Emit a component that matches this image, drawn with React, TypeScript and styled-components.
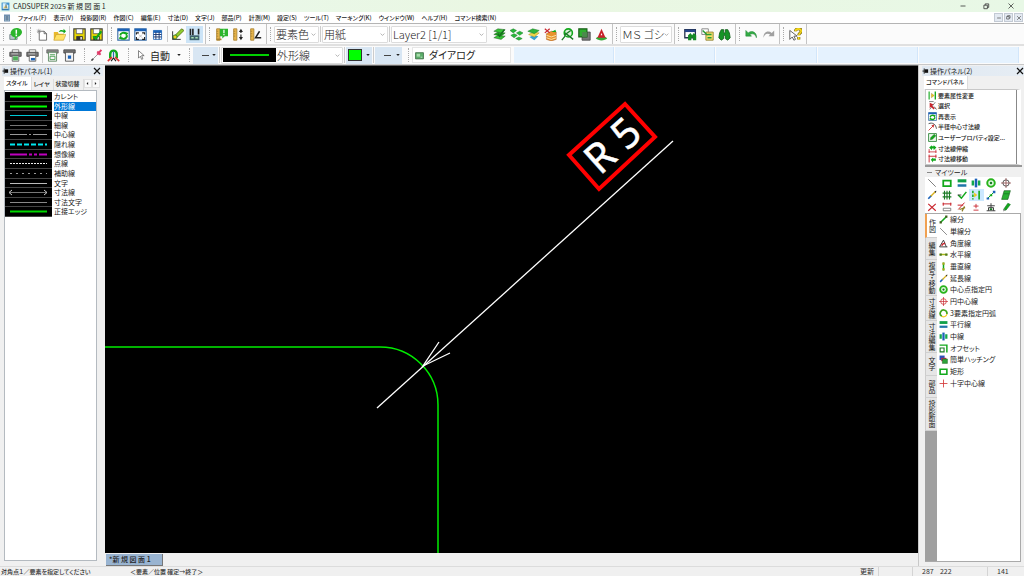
import React from "react";
import styled, { createGlobalStyle, css } from "styled-components";

const Global = createGlobalStyle`
  *, *::before, *::after { box-sizing: border-box; }
  body {
    margin: 0;
    background: #f0f0f0;
    color: #222;
    font-family: "Noto Sans CJK JP", "Noto Sans", sans-serif;
    font-size: 7px;
    line-height: 9px;
    font-feature-settings: "palt";
  }
  button, select, input {
    font: inherit;
    font-feature-settings: inherit;
    color: inherit;
    margin: 0;
    padding: 0;
    border: 0;
    background: transparent;
    border-radius: 0;
  }
  ul { list-style: none; margin: 0; padding: 0; }
`;

const G = "#12a81c";
const DG = "#1b7a26";
const Y = "#f2c81e";
const R = "#c8242c";
const B = "#1b62b8";
const K = "#333";

const doc = (
  <>
    <path d="M4 4h6l3 3v8H4z" fill="#fff" stroke="#555" />
    <path d="M10 4v3h3" fill="none" stroke="#555" />
  </>
);
const floppy = (
  <>
    <path d="M1 1h14v14H1z" fill="#e8d800" stroke="#444" strokeWidth="1.4" />
    <path d="M4 1h8v6H4z" fill="#fff" stroke="#555" />
    <path d="M4 10h8v5H4z" fill="#333" />
    <path d="M9 11h2v3H9z" fill="#ddd" />
  </>
);
const printer = (
  <>
    <path d="M4 1h8v4H4z" fill="#fff" stroke="#666" />
    <path d="M1 4h14v5H1z" fill="#777" stroke="#444" />
    <path d="M3 6h8" stroke="#ccc" />
    <path d="M4 8h8v7H4z" fill="#fff" stroke="#555" />
  </>
);
const ruler = <path d="M2 1h4v14H2zM2 4h2M2 7h2M2 10h2" fill="#e8b54a" stroke="#a88030" />;
const win = (
  <>
    <path d="M1 1h14v14H1z" fill="#fff" stroke="#3a6ea8" strokeWidth="1.4" />
    <path d="M1 1h14v3H1z" fill={B} />
  </>
);
const stack = (c1: string, c2: string, c3: string) => (
  <>
    <path d="M1 12l5-3 9 1-5 4z" fill={c3} stroke="#2b5b2b" strokeWidth=".6" />
    <path d="M1 8l5-3 9 1-5 4z" fill={c2} stroke="#2b5b2b" strokeWidth=".6" />
    <path d="M1 4l5-3 9 1-5 4z" fill={c1} stroke="#2b5b2b" strokeWidth=".6" />
  </>
);

const glyphs: Record<string, React.ReactNode> = {
  app: (
    <>
      <path d="M1 1h14v14H1z" fill="#3f93cf" />
      <path d="M3 2h6l4 4v7H3z" fill="#d9f0fb" />
      <path d="M4 11l5-6 3 6z" fill="#eec35b" />
      <path d="M2 13h11M9 3v8" stroke="#24618f" strokeWidth="1.4" />
    </>
  ),
  docApp: (
    <>
      <path d="M2 1h12v14H2z" fill="#6f8fae" />
      <path d="M4 4h8v9H4z" fill="#b8ccd8" />
      <path d="M4 6h8M4 10h8M8 4v9" stroke="#385c7e" strokeWidth="1.500" />
    </>
  ),
  info: (
    <>
      <path d="M1 8h9v6H1z" fill="#b9c6cc" stroke="#68777d" />
      <path d="M9 0c4 0 7 2 7 5s-3 6-6 6l-3 4v-4c-3 0-5-3-5-5s3-6 7-6z" fill="#2cb52c" />
      <path d="M9 2v5M9 8v2" stroke="#fff" strokeWidth="1.8" />
    </>
  ),
  newDoc: (
    <>
      {doc}
      <path d="M1 4h5M3.500 1v6M1.500 2l4 4M5.500 2l-4 4" stroke="#888" strokeWidth=".8" />
    </>
  ),
  open: (
    <>
      <path d="M1 5h5l1 2h6v8H1z" fill="#e9b92c" />
      <path d="M4 8h12l-3 7H1z" fill="#ffe164" stroke="#b8922a" strokeWidth=".6" />
      <path d="M7 5c1-3 4-3 6-2V1l3 3-3 3V5c-2-1-4-1-6 0z" fill={G} />
    </>
  ),
  save: floppy,
  saveAs: (
    <>
      {floppy}
      <path d="M4 10l3 3 7-9" fill="none" stroke={G} strokeWidth="2.600" />
    </>
  ),
  refresh: (
    <>
      {win}
      <path d="M4 9a4 3.500 0 0 1 7-2M12 9a4 3.500 0 0 1-7 3" fill="none" stroke={G} strokeWidth="2.400" />
      <path d="M10 5l4 1-3 4zM6 14l-4-1 3-4z" fill={G} />
    </>
  ),
  fit: (
    <>
      {win}
      <path d="M3 8V6h3M10 6h3v2M13 11v3h-3M6 14H3v-3" fill="none" stroke="#222" strokeWidth="1.400" />
      <path d="M6 8l4 4M10 8l-4 4" stroke="#aaa" strokeWidth=".8" />
    </>
  ),
  grid: (
    <>
      <path d="M3 3h10v11H3z" fill="#fff" stroke={B} />
      <path d="M3 3h10v3H3z" fill={B} />
      <path d="M3 8h10M3 11h10M6 5v9M10 5v9" stroke="#223d74" strokeWidth="1.200" />
    </>
  ),
  sketch: (
    <>
      <path d="M2 4v10h10M2 14L14 3" fill="none" stroke="#333" strokeWidth="1.200" />
      <path d="M5 9l8-8 3 2-8 8-4 1z" fill="#8fcf2c" stroke="#576d1b" />
      <circle cx="5" cy="11" r="2.500" fill={Y} stroke={DG} />
    </>
  ),
  pens: (
    <>
      <path d="M3 1v8M6 1v8M13 1v7" stroke="#222" strokeWidth="2" />
      <path d="M2 9h12v6H2z" fill="#3d606b" />
      <path d="M4 12h3M9 12h3" stroke="#a8e0b4" strokeWidth="2" />
    </>
  ),
  rulerInfo: (
    <>
      {ruler}
      <path d="M6 1h10v9h-4l-3 3v-3H6z" fill="#2cb52c" />
      <path d="M11 2v4M11 7v2" stroke="#fff" strokeWidth="1.500" />
      <path d="M2 14h6" stroke="#a88030" strokeWidth="2" />
    </>
  ),
  rulerV: (
    <>
      {ruler}
      <path d="M11 3v10" stroke="#222" strokeWidth="1.400" strokeDasharray="3 2" />
      <path d="M8.500 5L11 1l2.500 4zM8.500 11l2.500 4 2.500-4z" fill="#222" />
    </>
  ),
  rulerA: (
    <>
      {ruler}
      <path d="M13 4l-5 8h7" fill="none" stroke="#222" strokeWidth="1.800" />
    </>
  ),
  layers1: (
    <>
      {stack("#35c435", "#1da51d", "#35c435")}
      <path d="M6 7l2 3 6-8" fill="none" stroke="#156f1e" strokeWidth="2" />
    </>
  ),
  layers2: (
    <path d="M0 3l4-2 4 2-4 3zM8 6l4-2 4 2-4 3zM1 9l4-2 4 2-4 3zM7 13l4-2 4 2-4 2z" fill="#27b83b" stroke={DG} strokeWidth=".6" />
  ),
  layers3: (
    <>
      <path d="M3 11l5-2 6 1-5 5z" fill="#3aa1d0" />
      <path d="M2 8l6-3 7 1-6 5z" fill="#f0d44a" stroke="#a89020" strokeWidth=".6" />
      <path d="M1 4l6-3 8 2-6 4z" fill="#2fb43b" stroke={DG} strokeWidth=".6" />
    </>
  ),
  layers4: (
    <>
      <path d="M3 7l6-3 6 1v9l-6 2-6-2z" fill="#e8932c" stroke="#a0521c" strokeWidth=".6" />
      <path d="M3 9l6 2 6-2M3 12l6 2 6-2" fill="none" stroke="#fff0c0" />
      <path d="M9 5l5-3 1 3z" fill={G} />
      <path d="M1 1l6 5M7 1L1 6" stroke={R} strokeWidth="1.500" />
    </>
  ),
  zoom: (
    <>
      <circle cx="9" cy="6" r="5" fill="#dff4dc" stroke={G} strokeWidth="2" />
      <path d="M5 10l-4 5M5 6l10 8M12 3L4 9" stroke={DG} strokeWidth="1.600" />
    </>
  ),
  squares: (
    <>
      <path d="M5 5h10v10H5z" fill="#777" stroke="#444" />
      <path d="M1 1h10v10H1z" fill="#2fae2f" stroke="#175e17" strokeWidth="1.400" />
      <path d="M5 5h6v6H5z" fill="#4c8a4c" />
    </>
  ),
  letterA: (
    <>
      <path d="M1 13c2-4 12-4 14 0-3 3-11 3-14 0z" fill="#38a838" />
      <path d="M8 1l5 11H3z" fill="#c8202a" />
      <path d="M8 6l1 3H7z" fill="#fff" />
    </>
  ),
  findWin: (
    <>
      <path d="M1 2h13v10H1z" fill="#fff" stroke="#25324e" strokeWidth="1.600" />
      <path d="M1 2h13v3H1z" fill="#25458a" />
      <path d="M5 15V9l3-3 2 3 2-3 3 3v6h-4v-3h-2v3z" fill="#158a25" />
    </>
  ),
  copies: (
    <>
      <path d="M1 1h8v7H1z" fill="#fff" stroke="#777" />
      <path d="M6 5h9v10H6z" fill="#f5e06c" stroke="#8a7a28" />
      <path d="M2 3l6 6M8 8h5M8 12h5" stroke="#279a35" strokeWidth="1.800" />
    </>
  ),
  binoc: (
    <path d="M4 2h3v4h2V2h3l2 4 1 6-3 3-3-2V9H7v4l-3 2-3-3 1-6z" fill="#179427" stroke="#0d5b17" />
  ),
  undo: <path d="M1 3v7h7L6 8c4-2 7 0 8 4 1-6-5-10-10-6z" fill="#33ad45" stroke="#1d7e2f" strokeWidth=".6" />,
  redo: <path d="M15 3v7H8l2-2c-4-2-7 0-8 4C1 6 7 2 12 6z" fill="#a0a0a0" />,
  help: (
    <>
      <path d="M1 3v11l3-3 2 4 2-1-2-4h4z" fill="#fff" stroke="#444" />
      <path d="M8 4c0-4 7-4 7 0 0 2-3 2-3 5M12 11v3" fill="none" stroke="#7d6a10" strokeWidth="3.800" />
      <path d="M8 4c0-4 7-4 7 0 0 2-3 2-3 5M12 11v3" fill="none" stroke="#f5d818" strokeWidth="2" />
    </>
  ),
  print1: (
    <>
      {printer}
      <path d="M5 9h6v5H5z" fill="#4fae58" />
    </>
  ),
  print2: (
    <>
      {printer}
      <path d="M6 11h5v3H6z" fill={B} />
    </>
  ),
  print3: (
    <>
      <path d="M1 1h14v4H1z" fill="#888" stroke="#666" />
      <path d="M3 4h10v11H3z" fill="#f4f4f4" stroke="#4f7f55" />
      <path d="M5 7h6M5 9h6v4H5z" fill="none" stroke="#3a9b45" />
    </>
  ),
  print4: (
    <>
      <path d="M1 1h14v4H1z" fill="#777" stroke="#444" />
      <path d="M3 4h10v11H3z" fill="#f4f4f4" stroke="#444" />
      <path d="M6 8h4v4H6z" fill={B} />
    </>
  ),
  snap: (
    <>
      <path d="M1 15L12 4" stroke="#888" />
      <path d="M9 3l4 4M14 1L9 7" stroke="#df3a68" strokeWidth="2.400" />
      <path d="M2 14l2-2" stroke="#444" strokeWidth="2" />
    </>
  ),
  magnet: (
    <>
      <path d="M4 11V6a4 4 0 0 1 8 0v5" fill="none" stroke={G} strokeWidth="3" />
      <path d="M8 3v7" stroke="#2c67b4" strokeWidth="1.600" />
      <path d="M1 15l5-5M15 15l-5-5" stroke="#d33" strokeWidth="2" />
      <path d="M5 15l3-4 3 4" fill="none" stroke="#222" strokeWidth="1.400" />
    </>
  ),
  pointer: <path d="M4 1v12l3-3 2 5 2-1-2-5h4z" fill="#fff" stroke="#444" />,
  dialog: (
    <>
      <path d="M1 3h14v11H1z" fill="#5cae6a" stroke="#37663f" strokeWidth="1.400" />
      <path d="M3 5h6v5H3z" fill="#a8dbab" />
      <path d="M10 11h3" stroke="#fff" />
    </>
  ),
  attr: (
    <>
      <path d="M2 1v14" stroke={G} strokeWidth="2" />
      <path d="M13 1v14" stroke={G} strokeWidth="2.400" />
      <path d="M6 4l5 4-5 4z" fill={Y} stroke="#86702a" strokeWidth=".6" />
    </>
  ),
  attrTool: (
    <>
      <path d="M3 1v14" stroke={G} strokeWidth="2.400" strokeDasharray="4 2" />
      <path d="M13 1v14" stroke={G} strokeWidth="2.600" />
      <path d="M5 4l5 4-5 4z" fill={Y} />
    </>
  ),
  select: (
    <>
      <path d="M2 1h8M3 15L13 2" stroke="#666" strokeWidth="1.400" />
      <path d="M3 3l7 3-3 2 5 5-2 2-5-5-2 3z" fill={R} />
      <path d="M11 10l4 5" stroke="#333" strokeWidth="1.400" />
    </>
  ),
  radius: (
    <>
      <path d="M1 3c7-3 13 1 14 9" fill="none" stroke="#444" strokeWidth="1.600" />
      <path d="M1 15L10 6" stroke="#c33" strokeWidth="1.600" />
      <path d="M11 4l-1 6-4-4z" fill="#c33" />
    </>
  ),
  prop: (
    <>
      <path d="M1 1h14v14H1z" fill="#eaf7ea" stroke={DG} strokeWidth="1.400" />
      <path d="M4 12l1-4 6-6 3 3-6 6z" fill={G} stroke="#175e17" strokeWidth=".7" />
    </>
  ),
  stretch: (
    <>
      <path d="M1 14h14M2 9v7M14 10v6" stroke={R} strokeWidth="1.400" />
      <path d="M2 6l5-4v2h3V2l5 4-5 5V8H7v3z" fill={G} />
    </>
  ),
  moveDim: (
    <>
      <path d="M1 4h14M2 1v14M14 1v6" stroke={R} strokeWidth="1.600" />
      <path d="M5 10l4-4v2h5v4H9v3z" fill={G} />
    </>
  ),
  thin: <path d="M2 2l12 12" stroke="#555" strokeWidth="1.200" />,
  rect: <path d="M2 4h12v9H2z" fill="none" stroke={G} strokeWidth="2.800" />,
  parallel: (
    <>
      <path d="M1 2h14v5H1z" fill="#12a048" />
      <path d="M1 10h14v4H1z" fill="#2076a8" />
    </>
  ),
  midline: (
    <>
      <path d="M1 4h4v8H1zM11 4h4v8h-4z" fill="#12a84c" />
      <path d="M6 1h4v14H6z" fill={B} />
    </>
  ),
  circle: (
    <>
      <circle cx="8" cy="8" r="6" fill="#e2f8e2" stroke="#28b41c" strokeWidth="3.200" />
      <circle cx="8" cy="8" r="2" fill={DG} />
    </>
  ),
  cross: (
    <>
      <circle cx="8" cy="8" r="5" fill="none" stroke="#c33" strokeWidth="1.400" />
      <path d="M8 0v16M0 8h16" stroke={R} strokeWidth="1.200" />
    </>
  ),
  crossDark: (
    <>
      <circle cx="8" cy="8" r="5" fill="none" stroke="#444" strokeWidth="1.400" />
      <path d="M8 0v16M0 8h16" stroke="#844" strokeWidth="1.200" />
    </>
  ),
  extend: (
    <>
      <path d="M2 14l5-5" stroke={B} strokeWidth="2.600" />
      <path d="M6 10l8-8" stroke="#d8b01c" strokeWidth="2.400" />
      <path d="M12 2l3-1-1 4z" fill="#333" />
    </>
  ),
  hash: <path d="M4 1v14M8 1v14M12 1v14M1 5h14M1 11h14" stroke={DG} strokeWidth="1.800" />,
  trim: (
    <>
      <path d="M2 8l5 5 8-10" fill="none" stroke={G} strokeWidth="2.400" />
      <path d="M1 8h6" stroke="#333" strokeWidth="1.400" />
    </>
  ),
  dots: (
    <>
      <path d="M2 14L14 2" stroke={G} strokeWidth="1.600" />
      <path d="M1 12h4v3H1zM11 1h4v4h-4z" fill={B} />
      <path d="M6 7h4v3H6z" fill={G} />
    </>
  ),
  leaf: (
    <>
      <path d="M5 1h10l-4 14H1z" fill="#28b032" stroke="#1b5e20" strokeWidth="1" />
      <path d="M4 6h9" stroke={DG} strokeWidth="1.400" />
    </>
  ),
  del: <path d="M2 3l12 11M14 3L2 14" stroke={R} strokeWidth="1.800" />,
  dim: (
    <>
      <path d="M1 3h14M2 1v5M14 1v5" stroke={R} strokeWidth="1.600" />
      <path d="M2 10h12v4H2z" fill="none" stroke="#777" strokeWidth="1.400" />
    </>
  ),
  cutDim: (
    <>
      <path d="M1 5h9M2 12L12 1" stroke={R} strokeWidth="1.600" />
      <path d="M4 12l9-3M8 15l4-8" stroke="#8b7a22" strokeWidth="1.800" />
    </>
  ),
  pm: <path d="M8 3v7M4 6.500h8M4 13h8" stroke={R} strokeWidth="1.400" />,
  bridge: (
    <>
      <path d="M1 14h14M4 14V9h8v5M8 2v7M2 6h12" fill="none" stroke="#444" strokeWidth="1.600" />
      <path d="M6 10h4v3H6z" fill={DG} />
    </>
  ),
  brush: (
    <>
      <path d="M4 12L11 2l4 2-7 9z" fill={G} stroke={DG} />
      <path d="M3 15l2-4 2 2z" fill="#777" />
    </>
  ),
  seg: (
    <>
      <path d="M3 13L13 3" stroke={G} strokeWidth="2.800" />
      <path d="M1 11h4v4H1zM11 1h4v4h-4z" fill="#3f5c1c" />
    </>
  ),
  angle: (
    <>
      <path d="M1 14h14M1 14L8 2l5 12" fill="none" stroke="#333" strokeWidth="1.600" />
      <path d="M5 12a5 5 0 0 1 6-4" fill="none" stroke={R} strokeWidth="2.600" />
    </>
  ),
  horiz: (
    <>
      <path d="M1 8h14" stroke="#a8b81c" strokeWidth="2.600" />
      <path d="M1 6h4v4H1zM11 6h4v4h-4z" fill="#4f7a1c" />
    </>
  ),
  vert: (
    <>
      <path d="M8 1v14" stroke={G} strokeWidth="2.600" />
      <path d="M6 1h4v4H6zM6 11h4v4H6z" fill="#a8a81c" />
    </>
  ),
  arc: (
    <>
      <path d="M5 13A6 6 0 1 1 14 9" fill="none" stroke="#42a51e" strokeWidth="3" />
      <path d="M5 13a6 6 0 0 0 9-4" fill="none" stroke={Y} strokeWidth="2" />
    </>
  ),
  offset: (
    <>
      <path d="M1 2h13v13" fill="none" stroke={G} strokeWidth="2.600" />
      <path d="M2 7h7v7H2z" fill="none" stroke={DG} strokeWidth="2" />
    </>
  ),
  hatch: (
    <>
      <path d="M1 1h9v8H1z" fill="#2b50b8" />
      <path d="M4 5h9v6H4z" fill="#c02a50" />
      <path d="M6 7h9v8H6z" fill="#2da33a" stroke="#175e17" strokeWidth=".8" />
    </>
  ),
  plus: <path d="M8 1v14M1 8h14" stroke="#d43a3a" strokeWidth="1.500" />,
  pin: (
    <>
      <path d="M6 3h8v8H6z" fill="#111" />
      <path d="M1 7h5M5 1v12" stroke="#111" strokeWidth="2" />
    </>
  ),
  close: <path d="M2 2l12 12M14 2L2 14" stroke="#111" strokeWidth="2.400" />,
  winMin: <path d="M3 8h10" stroke={K} strokeWidth="1.600" />,
  winMax: (
    <>
      <path d="M2 5h8v8H2z" fill="none" stroke={K} strokeWidth="1.800" />
      <path d="M5 5V2h8v8h-3" fill="none" stroke={K} strokeWidth="1.800" />
    </>
  ),
  winClose: <path d="M3 3l10 10M13 3L3 13" stroke={K} strokeWidth="1.500" />,
  left: <path d="M10 3L5 8l5 5z" fill="#222" />,
  right: <path d="M6 3l5 5-5 5z" fill="#222" />,
  caret: <path d="M1 4h14l-7 8z" fill="#222" />,
  chevron: <path d="M2 5l6 6 6-6" fill="none" stroke="#888" strokeWidth="2" />,
};

const Svg = styled.svg`
  display: block;
  flex: none;
`;
const Icon = ({ name, size = 13 }: { name: string; size?: number }) => (
  <Svg width={size} height={size} viewBox="0 0 16 16" aria-hidden="true">
    {glyphs[name]}
  </Svg>
);

const Page = styled.div`
  min-height: 100vh;
  display: flex;
  flex-direction: column;
`;

/* ---------- title and menu ---------- */
const TitleBar = styled.header`
  height: 12px;
  display: flex;
  align-items: center;
  gap: 3px;
  padding: 0 9px 0 1px;
  background: linear-gradient(90deg, #e8f8ee, #eaf7e2 50%, #e8f8e6);
  color: #222;
`;
const Title = styled.h1`
  flex: 1;
  margin: 0;
  font-size: 7px;
  font-weight: 400;
  white-space: pre;
`;
const WindowButtons = styled.div`
  display: flex;
  gap: 15px;
`;
const IconButton = styled.button`
  display: flex;
  align-items: center;
  justify-content: center;
  width: 9px;
  height: 9px;
`;
const MenuBar = styled.nav`
  height: 11px;
  display: flex;
  align-items: center;
  gap: 7px;
  padding: 0 1px 0 3px;
  background: #fff;
  color: #222;
`;
const MenuItem = styled.button`
  white-space: nowrap;
  font-size: 6px;
  font-weight: 500;
  line-height: 10px;
`;
const ChildButtons = styled.div`
  display: flex;
  gap: 1px;
  margin-left: auto;
`;
const ChildButton = styled.button`
  display: flex;
  align-items: center;
  justify-content: center;
  width: 9px;
  height: 9px;
  background: #e4eaf2;
  border: 1px solid #c3cad4;
`;

/* ---------- toolbars ---------- */
const Toolbar = styled.div`
  height: 21px;
  display: flex;
  background: #fbfbfb;
  border-top: 1px solid #b4b4b4;
`;
const ToolbarLower = styled(Toolbar)`
  border-top: 2px solid #e0e0e0;
  border-bottom: 1px solid #c8c8c8;
`;
const Group = styled.div<{ $open?: boolean }>`
  display: flex;
  align-items: center;
  padding: 0 2px 0 3px;
  border-right: 1px solid ${(p) => (p.$open ? "transparent" : "#c4c4c4")};
  &::before {
    content: "";
    width: 0;
    height: 14px;
    margin-right: 3px;
    border-left: 1px dotted #aaa;
  }
`;
const Tool = styled.button<{ $active?: boolean }>`
  display: flex;
  align-items: center;
  justify-content: center;
  width: 17px;
  height: 17px;
  background: ${(p) => (p.$active ? "#cce4f7" : "transparent")};
`;
const Rule = styled.span`
  width: 1px;
  height: 16px;
  margin: 0 1px;
  background: #ccc;
`;
const Combo = styled.label<{ $w: number }>`
  display: flex;
  align-items: center;
  width: ${(p) => p.$w}px;
  height: 17px;
  padding: 0 2px 0 1px;
  background: #fff;
  border: 1px solid #dcdcdc;
  border-radius: 1px;
`;
const ComboSelect = styled.select`
  appearance: none;
  flex: 1;
  min-width: 0;
  font-size: 11px;
  line-height: 15px;
  font-weight: 300;
  color: #222;
  overflow: hidden;
`;
const Spacer = styled.span`
  width: 4px;
`;
const DropButton = styled.button<{ $w: number; $tint?: boolean }>`
  display: flex;
  align-items: center;
  justify-content: space-between;
  width: ${(p) => p.$w}px;
  height: 17px;
  padding: 0 2px 0 1px;
  font-size: 10px;
  line-height: 15px;
  background: ${(p) => (p.$tint ? "#d8e6f3" : "transparent")};
`;
const Swatch = styled.span`
  width: 14px;
  height: 12px;
  margin-left: 1px;
  background: #00ff00;
  border: 1px solid #333;
`;
const Dash = styled.span`
  width: 7px;
  height: 1px;
  margin-left: 8px;
  background: #444;
`;
const LinePreview = styled.span`
  display: flex;
  flex: none;
  align-items: center;
  width: 53px;
  height: 14px;
  margin-right: 1px;
  padding: 0 7px;
  background: #000;
  &::before {
    content: "";
    flex: 1;
    height: 2px;
    background: #00d000;
  }
`;
const DialogField = styled.button`
  display: flex;
  align-items: center;
  gap: 5px;
  width: 99px;
  height: 16px;
  padding: 0 2px;
  font-size: 10px;
  line-height: 14px;
  background: #fff;
  border: 1px solid #e6e6e6;
`;
const Slots = styled.div`
  flex: 1;
  display: flex;
  gap: 1px;
  padding: 1px 5px 1px 0;
`;
const Slot = styled.span`
  flex: 1;
  background: #e5f2fe;
  border-right: 1px solid #d2e6fa;
`;

/* ---------- body ---------- */
const Body = styled.div`
  flex: 1;
  display: flex;
`;
const SidePanel = styled.aside<{ $w: number; $right?: boolean }>`
  display: flex;
  flex-direction: column;
  width: ${(p) => p.$w}px;
  flex: none;
  padding: ${(p) => (p.$right ? "1px 2px 4px 5px" : "1px 8px 5px 4px")};
  background: #f0f0f0;
  ${(p) => p.$right && css`border-left: 1px solid #c8c8c8;`}
`;
const PanelHead = styled.div<{ $wide?: boolean }>`
  display: flex;
  align-items: center;
  gap: 1px;
  height: 10px;
  margin-left: -2px;
  margin-right: ${(p) => (p.$wide ? -2 : -6)}px;
  padding-right: ${(p) => (p.$wide ? 0 : 2)}px;
  background: linear-gradient(90deg, #dfe8f1, #e6edf4);
  & > h2 {
    flex: 1;
    margin: 0;
    font-size: 7px;
    font-weight: 400;
  }
`;
const Tabs = styled.div`
  display: flex;
  align-items: flex-end;
  height: 14px;
`;
const CommandTabs = styled(Tabs)`
  height: 13px;
`;
const Tab = styled.button<{ $on?: boolean }>`
  height: ${(p) => (p.$on ? 13 : 11)}px;
  padding: 0 3px 2px 2px;
  white-space: nowrap;
  font-size: 6px;
  font-weight: 500;
  background: ${(p) => (p.$on ? "#fff" : "#f0f0f0")};
  border-right: 1px solid #ddd;
`;
const Nudges = styled.div`
  display: flex;
  margin-left: auto;
`;
const Nudge = styled.button`
  display: flex;
  align-items: center;
  justify-content: center;
  width: 8px;
  height: 9px;
  margin-bottom: 2px;
  background: #fafafa;
  border: 1px solid #e2e2e2;
`;
const StyleBox = styled.div`
  flex: 1;
  padding-top: 1px;
  background: #fff;
  border: 1px solid #b4bac0;
`;
const StyleList = styled.ul`
  display: grid;
  grid-template-rows: repeat(13, minmax(0, 1fr));
  height: 125px;
`;
const StyleRow = styled.button<{ $on?: boolean }>`
  display: flex;
  align-items: stretch;
  width: 100%;
  height: 100%;
  gap: 2px;
  text-align: left;
  & > svg { height: 100%; background: #000; border-bottom: 1px solid #444; }
  & > span {
    flex: 1;
    white-space: nowrap;
    background: ${(p) => (p.$on ? "#0078d7" : "transparent")};
    color: ${(p) => (p.$on ? "#fff" : "#222")};
  }
`;
const Center = styled.main`
  flex: 1;
  min-width: 0;
  display: flex;
  flex-direction: column;
`;
const Canvas = styled.svg`
  flex: 1;
  width: 100%;
  min-height: 0;
  display: block;
  background: #000;
  border-top: 1px solid #666;
`;
const DimensionText = styled.text`
  font-family: "Noto Sans", sans-serif;
  font-size: 41px;
  fill: #fff;
  stroke: #fff;
  stroke-width: 0.5px;
`;
const SheetTabs = styled.div`
  height: 13px;
  padding: 1px 0 0 1px;
`;
const SheetTab = styled.button`
  width: 57px;
  height: 12px;
  padding-left: 3px;
  text-align: left;
  font-weight: 500;
  white-space: pre;
  background: #99b4d1;
  border-right: 1px solid #777;
  border-bottom: 1px solid #777;
`;

const CommandList = styled.ul`
  display: grid;
  grid-template-rows: repeat(7, 1fr);
  height: 76px;
  flex: none;
  margin: 0 1px;
  background: #fff;
  border: 1px solid #c8c8c8;
  border-right: 4px solid #fff;
  box-shadow: inset -1px 0 0 #888;
`;
const Command = styled.button<{ $small?: boolean }>`
  display: flex;
  align-items: center;
  gap: 2px;
  width: 100%;
  height: 100%;
  padding-left: 2px;
  white-space: nowrap;
  ${(p) => p.$small && css`
    font-size: 6px;
    font-weight: 500;
    gap: 1px;
  `}
`;
const ToolsHead = styled.div`
  display: flex;
  align-items: center;
  gap: 3px;
  flex: none;
  height: 12px;
  margin-left: 1px;
  padding-left: 2px;
  border-top: 2px solid #999;
  &::before {
    content: "";
    width: 5px;
    height: 1px;
    background: #888;
  }
`;
const ToolGrid = styled.div`
  display: grid;
  grid-template-columns: repeat(6, 1fr);
  grid-auto-rows: 12px;
  flex: none;
  padding-right: 8px;
  margin: 0 1px;
  background: #fff;
  border-bottom: 1px solid #aaa;
`;
const GridTool = styled.button<{ $on?: boolean }>`
  display: flex;
  align-items: center;
  justify-content: center;
  background: ${(p) => (p.$on ? "#cce8ff" : "transparent")};
`;
const Drawer = styled.div`
  flex: 1;
  display: flex;
  margin: 0 1px;
  background: #fff;
  border-right: 1px solid #aaa;
  border-bottom: 1px solid #aaa;
`;
const SideTabs = styled.div`
  width: 12px;
  background: #a0a0a0;
  display: flex;
  flex-direction: column;
`;
const SideTab = styled.button<{ $h: number; $on?: boolean }>`
  writing-mode: vertical-rl;
  font-feature-settings: "vpal";
  display: flex;
  align-items: center;
  justify-content: center;
  height: ${(p) => p.$h}px;
  width: 12px;
  white-space: nowrap;
  background: ${(p) => (p.$on ? "#fff" : "#e6e6e6")};
  border-left: ${(p) => (p.$on ? "2px solid #f0a050" : "1px solid #ccc")};
  border-bottom: 1px solid #d0d0d0;
`;
const DrawerList = styled.ul`
  flex: 1;
  display: grid;
  grid-template-rows: repeat(15, 1fr);
  height: 175px;
`;

const StatusBar = styled.footer`
  display: flex;
  height: 10px;
  border-top: 1px solid #dcdcdc;
  white-space: pre;
  color: #333;
`;
const StatusCell = styled.span<{ $w?: number; $line?: boolean; $small?: boolean }>`
  ${(p) => (p.$w ? `width: ${p.$w}px;` : "flex: 1;")}
  padding-left: 1px;
  ${(p) => p.$line && css`border-left: 1px solid #d4d4d4; padding-left: 9px;`}
  ${(p) => p.$small && css`font-size: 6px; font-weight: 500;`}
`;

const menus = ["ファイル(F)", "表示(V)", "投影図(R)", "作図(C)", "編集(E)", "寸法(D)", "文字(J)", "部品(P)", "計測(M)", "設定(S)", "ツール(T)", "マーキング(K)", "ウインドウ(W)", "ヘルプ(H)", "コマンド検索(N)"];

const styles: { name: string; color: string; width?: number; dash?: string; arrows?: boolean }[] = [
  { name: "カレント", color: "#00ff00", width: 2 },
  { name: "外形線", color: "#00ff00", width: 2 },
  { name: "中線", color: "#00c8d4", width: 1 },
  { name: "細線", color: "#777" },
  { name: "中心線", color: "#999", dash: "17 2 2 2" },
  { name: "隠れ線", color: "#00e8f0", width: 2, dash: "5 2" },
  { name: "想像線", color: "#c000c0", width: 2, dash: "17 2 3 2 3 2" },
  { name: "点線", color: "#eee", dash: "2 1" },
  { name: "補助線", color: "#999", dash: "2 4" },
  { name: "文字", color: "#bbb" },
  { name: "寸法線", color: "#777", arrows: true },
  { name: "寸法文字", color: "#888" },
  { name: "正接エッジ", color: "#00d800", width: 2 },
];

const commands = [
  ["attr", "要素属性変更"], ["select", "選択"], ["refresh", "再表示"], ["radius", "半径中心寸法線"],
  ["prop", "ユーザープロパティ設定..."], ["stretch", "寸法線伸縮"], ["moveDim", "寸法線移動"],
];
const gridTools = ["thin", "rect", "parallel", "midline", "circle", "crossDark", "extend", "hash", "trim", "attrTool", "dots", "leaf", "del", "dim", "cutDim", "pm", "bridge", "brush"];
const sideTabs: [string, number][] = [["作図", 24], ["編集", 22], ["複写・移動", 36], ["寸法線", 25], ["寸法編集", 32], ["文字", 23], ["部品", 22], ["投影断面", 33]];
const drawer = [
  ["seg", "線分"], ["thin", "単線分"], ["angle", "角度線"], ["horiz", "水平線"], ["vert", "垂直線"],
  ["extend", "延長線"], ["circle", "中心点指定円"], ["cross", "円中心線"], ["arc", "3要素指定円弧"],
  ["parallel", "平行線"], ["midline", "中線"], ["offset", "オフセット"], ["hatch", "簡単ハッチング"],
  ["rect", "矩形"], ["plus", "十字中心線"],
];

const Tools = ({ names, active }: { names: string[]; active?: string }) => (
  <>
    {names.map((n) => (
      <Tool key={n} aria-label={n} $active={n === active}>
        <Icon name={n} />
      </Tool>
    ))}
  </>
);
const Picker = ({ w, label, value, children }: { w: number; label: string; value: string; children?: React.ReactNode }) => (
  <Combo $w={w}>
    {children}
    <ComboSelect aria-label={label} defaultValue={value}>
      <option>{value}</option>
    </ComboSelect>
    <Icon name="chevron" size={5} />
  </Combo>
);

export default function App() {
  return (
    <Page>
      <Global />
      <TitleBar>
        <Icon name="app" size={9} />
        <Title>CADSUPER 2025 新 規 図 面 1</Title>
        <WindowButtons>
          <IconButton aria-label="最小化"><Icon name="winMin" size={8} /></IconButton>
          <IconButton aria-label="元に戻す"><Icon name="winMax" size={7} /></IconButton>
          <IconButton aria-label="閉じる"><Icon name="winClose" size={8} /></IconButton>
        </WindowButtons>
      </TitleBar>
      <MenuBar>
        <Icon name="docApp" size={8} />
        {menus.map((m) => <MenuItem key={m}>{m}</MenuItem>)}
        <ChildButtons>
          <ChildButton aria-label="図面を最小化"><Icon name="winMin" size={6} /></ChildButton>
          <ChildButton aria-label="図面を元に戻す"><Icon name="winMax" size={5} /></ChildButton>
          <ChildButton aria-label="図面を閉じる"><Icon name="winClose" size={6} /></ChildButton>
        </ChildButtons>
      </MenuBar>

      <Toolbar>
        <Group><Tools names={["info"]} /></Group>
        <Group><Tools names={["newDoc", "open"]} /><Rule /><Tools names={["save", "saveAs"]} /></Group>
        <Group><Tools names={["refresh", "fit", "grid"]} /><Rule /><Tools names={["sketch", "pens"]} active="pens" /></Group>
        <Group><Tools names={["rulerInfo", "rulerV", "rulerA"]} /></Group>
        <Group>
          <Picker w={45} label="要素色" value="要素色" />
          <Rule />
          <Picker w={66} label="用紙" value="用紙" />
          <Rule />
          <Picker w={96} label="レイヤ" value="Layer2 [1/1]" />
          <Spacer />
          <Tools names={["layers1", "layers2", "layers3", "layers4", "zoom", "squares", "letterA"]} />
        </Group>
        <Group><Picker w={52} label="フォント" value="ＭＳ ゴシック" /></Group>
        <Group><Tools names={["findWin", "copies", "binoc"]} /></Group>
        <Group><Tools names={["undo", "redo"]} /></Group>
        <Group><Tools names={["help"]} /></Group>
      </Toolbar>

      <ToolbarLower>
        <Group $open><Tools names={["print1", "print2"]} /><Rule /><Tools names={["print3", "print4"]} /></Group>
        <Group $open><Tools names={["snap", "magnet"]} /></Group>
        <Group $open>
          <Tool aria-label="選択モード"><Icon name="pointer" size={10} /></Tool>
          <DropButton $w={34}>自動<Icon name="caret" size={4} /></DropButton>
        </Group>
        <Group $open>
          <DropButton $w={25} $tint aria-label="線幅"><Dash /><Icon name="caret" size={4} /></DropButton>
          <Rule />
          <Picker w={122} label="線種" value="外形線"><LinePreview /></Picker>
          <Rule />
          <DropButton $w={26} $tint aria-label="色"><Swatch /><Icon name="caret" size={4} /></DropButton>
          <Rule />
          <DropButton $w={27} $tint aria-label="線の太さ"><Dash /><Icon name="caret" size={4} /></DropButton>
        </Group>
        <Group $open>
          <DialogField><Icon name="dialog" size={9} />ダイアログ</DialogField>
        </Group>
        <Slots><Slot /><Slot /><Slot /><Slot /><Slot /></Slots>
      </ToolbarLower>

      <Body>
        <SidePanel $w={105}>
          <PanelHead>
            <Icon name="pin" size={7} />
            <h2>操作パネル(1)</h2>
            <IconButton aria-label="閉じる"><Icon name="close" size={8} /></IconButton>
          </PanelHead>
          <Tabs>
            <Tab $on>スタイル</Tab>
            <Tab>レイヤ</Tab>
            <Tab>状態切替</Tab>
            <Nudges>
              <Nudge aria-label="前へ"><Icon name="left" size={5} /></Nudge>
              <Nudge aria-label="次へ"><Icon name="right" size={5} /></Nudge>
            </Nudges>
          </Tabs>
          <StyleBox>
            <StyleList>
              {styles.map((s, i) => (
                <li key={s.name}>
                  <StyleRow $on={i === 1}>
                    <Svg width="47" aria-hidden="true">
                      <path d="M5 4.500h37" stroke={s.color} strokeWidth={s.width ?? 1} strokeDasharray={s.dash} />
                      {s.arrows && <path d="M7 2L4 4.500l3 2.500M39 2l3 2.500-3 2.500" fill="none" stroke="#ccc" />}
                    </Svg>
                    <span>{s.name}</span>
                  </StyleRow>
                </li>
              ))}
            </StyleList>
          </StyleBox>
        </SidePanel>

        <Center>
          <Canvas aria-label="図面">
            <path d="M0 281H275A58 58 0 0 1 333 339V2000" fill="none" stroke="#00ec00" strokeWidth="1.500" />
            <g stroke="#fff" strokeWidth="1.300" fill="none">
              <path d="M272 342L568 75" />
              <path d="M334 276L318 300L345 287" />
            </g>
            <path d="M520 38L550 71L494 123L464 89Z" fill="none" stroke="#f00" strokeWidth="4" />
            <DimensionText transform="translate(495 110) rotate(-42)">R 5</DimensionText>
          </Canvas>
          <SheetTabs><SheetTab>*新 規 図 面 1</SheetTab></SheetTabs>
        </Center>

        <SidePanel $w={106} $right>
          <PanelHead $wide>
            <Icon name="pin" size={7} />
            <h2>操作パネル(2)</h2>
            <IconButton aria-label="閉じる"><Icon name="close" size={8} /></IconButton>
          </PanelHead>
          <CommandTabs><Tab $on>コマンドパネル</Tab></CommandTabs>
          <CommandList>
            {commands.map(([icon, name]) => (
              <li key={name}><Command $small><Icon name={icon} size={9} />{name}</Command></li>
            ))}
          </CommandList>
          <ToolsHead>マイツール</ToolsHead>
          <ToolGrid>
            {gridTools.map((n) => (
              <GridTool key={n} aria-label={n} $on={n === "attrTool"}><Icon name={n} size={10} /></GridTool>
            ))}
          </ToolGrid>
          <Drawer>
            <SideTabs>
              {sideTabs.map(([name, h], i) => <SideTab key={name} $h={h} $on={i === 0}>{name}</SideTab>)}
            </SideTabs>
            <DrawerList>
              {drawer.map(([icon, name]) => (
                <li key={name}><Command><Icon name={icon} size={9} />{name}</Command></li>
              ))}
            </DrawerList>
          </Drawer>
        </SidePanel>
      </Body>

      <StatusBar>
        <StatusCell $w={129} $small>対角点１／要素を指定してください</StatusCell>
        <StatusCell $small>＜要素／位置 確定→終了＞</StatusCell>
        <StatusCell $w={19}>更新</StatusCell>
        <StatusCell $w={34} $line />
        <StatusCell $w={75} $line>287    222</StatusCell>
        <StatusCell $w={37} $line>141</StatusCell>
      </StatusBar>
    </Page>
  );
}
